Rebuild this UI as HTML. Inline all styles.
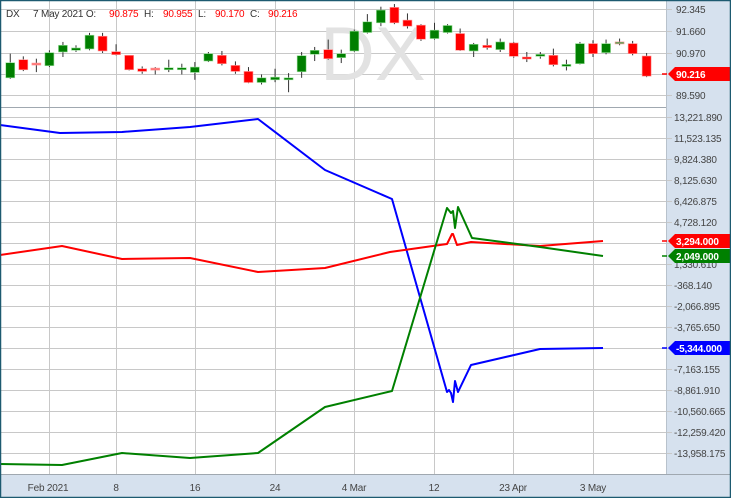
<!DOCTYPE html>
<html><head><meta charset="utf-8"><style>
html,body{margin:0;padding:0;background:#fff}
svg{display:block}
text{font-family:"Liberation Sans",sans-serif}
</style></head><body>
<svg id="s" width="731" height="498" xmlns="http://www.w3.org/2000/svg">
<rect x="0" y="0" width="731" height="498" fill="#fff"/>
<rect x="667" y="0" width="64" height="498" fill="#d6e1ee"/>
<rect x="0" y="475" width="731" height="23" fill="#d6e1ee"/>
<g id="grid" stroke="#c8c8c8" stroke-width="1"></g>
<text x="320" y="80" font-size="76" fill="#e2e2e2">DX</text>
<g id="candles"></g>
<line x1="0" y1="107.5" x2="667" y2="107.5" stroke="#a0a8b0"/>
<line x1="666.5" y1="0" x2="666.5" y2="475" stroke="#b8c2cc"/>
<line x1="0" y1="474.5" x2="731" y2="474.5" stroke="#a0a8b0"/>
<g font-size="10" letter-spacing="-0.2">
<text x="6" y="17" fill="#333">DX</text>
<text x="33" y="17" fill="#333">7 May 2021 O:</text>
<text x="109" y="17" fill="#f00">90.875</text>
<text x="144" y="17" fill="#333">H:</text>
<text x="163" y="17" fill="#f00">90.955</text>
<text x="198" y="17" fill="#333">L:</text>
<text x="215" y="17" fill="#f00">90.170</text>
<text x="250" y="17" fill="#333">C:</text>
<text x="268" y="17" fill="#f00">90.216</text>
</g>
<g id="lines" fill="none" stroke-width="2" stroke-linejoin="round"></g>
<g id="axis" font-size="10" fill="#444" letter-spacing="-0.2"></g>
<rect x="0.5" y="0.5" width="730" height="497" fill="none" stroke="#1d5a70" stroke-width="1.5"/>
</svg>
<script>
var NS="http://www.w3.org/2000/svg";
function el(p,t,a,txt){var e=document.createElementNS(NS,t);for(var k in a)e.setAttribute(k,a[k]);if(txt)e.textContent=txt;document.getElementById(p).appendChild(e);return e;}
var vx=[49,116,195,275,354,434,513,593];
vx.forEach(function(x){el("grid","line",{x1:x+.5,y1:0,x2:x+.5,y2:475});});
[9,31,53,74,95].forEach(function(y){el("grid","line",{x1:0,y1:y+.5,x2:667,y2:y+.5});});
var bl=["13,221.890","11,523.135","9,824.380","8,125.630","6,426.875","4,728.120","","1,330.610","-368.140","-2,066.895","-3,765.650","","-7,163.155","-8,861.910","-10,560.665","-12,259.420","-13,958.175"];
for(var i=0;i<17;i++){var y=Math.round(117+21*i);el("grid","line",{x1:0,y1:y+.5,x2:672,y2:y+.5});if(bl[i])el("axis","text",{x:674,y:y+4},bl[i]);}
[["92.345",9],["91.660",31],["90.970",53],["89.590",95]].forEach(function(a){el("grid","line",{x1:667,y1:a[1]+.5,x2:672,y2:a[1]+.5});el("axis","text",{x:676,y:a[1]+4},a[0]);});
[["Feb 2021",48],["8",116],["16",195],["24",275],["4 Mar",354],["12",434],["23 Apr",513],["3 May",593]].forEach(function(a){el("axis","text",{x:a[1],y:491,"text-anchor":"middle"},a[0]);});
var C=[[22,"G",187,232,160,235],[50,"R",178,208,168,212],[78,"P",188,192,175,215],[106,"G",157,196,150,200],[135,"G",135,155,125,170],[163,"G",143,150,135,155],[192,"G",105,146,98,150],[220,"R",108,152,98,158],[249,"R",154,163,132,165],[277,"R",165,208,165,210],[305,"R",205,213,198,220],[333,"P",203,207,200,222],[362,"G",202,208,178,215],[390,"G",202,208,190,222],[418,"G",200,216,185,238],[447,"G",160,182,155,185],[476,"R",165,190,152,195],[505,"R",195,213,183,220],[533,"R",213,246,200,248],[561,"G",232,246,222,252],[590,"G",230,238,205,245],[619,"G",232,238,218,275],[647,"G",166,214,155,232],[675,"G",150,162,140,182],[704,"R",148,175,118,178],[732,"G",160,172,148,188],[760,"G",93,152,88,155],[788,"G",65,97,42,100],[817,"G",30,68,20,78],[846,"R",22,68,12,72],[874,"R",60,78,40,85],[903,"R",75,117,72,122],[932,"G",90,115,68,118],[960,"G",76,97,72,100],[987,"R",100,150,85,152],[1016,"G",132,152,128,170],[1045,"R",135,142,115,148],[1073,"G",125,148,115,155],[1102,"R",128,168,125,172],[1130,"R",170,175,155,185],[1159,"G",162,168,155,175],[1187,"R",165,193,145,198],[1215,"G",192,198,178,210],[1244,"G",130,190,125,192],[1272,"R",130,160,120,170],[1300,"G",130,157,118,162],[1329,"L",125,129,115,135],[1357,"R",130,160,122,165],[1387,"R",167,227,158,230]];
var sx=731/1568,sy=110/328;
C.forEach(function(c){var x=c[0]*sx,col=c[1]=="G"?"#007f00":c[1]=="R"?"#ff0000":c[1]=="P"?"#ff7070":"#50a050";
el("candles","line",{x1:x,y1:c[4]*sy,x2:x,y2:c[5]*sy,stroke:"#333","stroke-width":1});
var t=c[2]*sy,b=Math.max(c[3]*sy,t+2);
el("candles","rect",{x:x-4.5,y:t,width:9,height:b-t,fill:col,stroke:c[1]=="G"?"#9be09b":"#ff9a9a","stroke-width":.6});});
function pl(pts,col){el("lines","polyline",{points:pts,stroke:col});}
pl("0,125 60,133 122,132 190,127 258,119 325,170 392,199 447,392 449,390 451,393 453,402 455,381 458,392 471,365 540,349 603,348","#0000ff");
pl("0,255 62,246 122,259 190,258 258,272 325,268 390,252 447,244 452,234 453,234 457,245 471,242 540,246 603,241","#ff0000");
pl("0,464 62,465 122,453 190,458 258,453 325,407 392,391 447,208 451,213 453,211 455,228 458,207 472,238 540,247 603,256","#008000");
function tag(y,txt,col){el("axis","polygon",{points:(668)+","+y+" 675,"+(y-7)+" 730,"+(y-7)+" 730,"+(y+7)+" 675,"+(y+7),fill:col});
el("axis","text",{x:676,y:y+4,fill:"#fff","font-weight":"bold","font-size":"10"},txt);
el("lines","line",{x1:662,y1:y,x2:667,y2:y,stroke:col,"stroke-width":1.5});}
tag(74,"90.216","#ff0000");tag(241,"3,294.000","#ff0000");tag(256,"2,049.000","#008000");tag(348,"-5,344.000","#0000ff");
</script>
</body></html>
